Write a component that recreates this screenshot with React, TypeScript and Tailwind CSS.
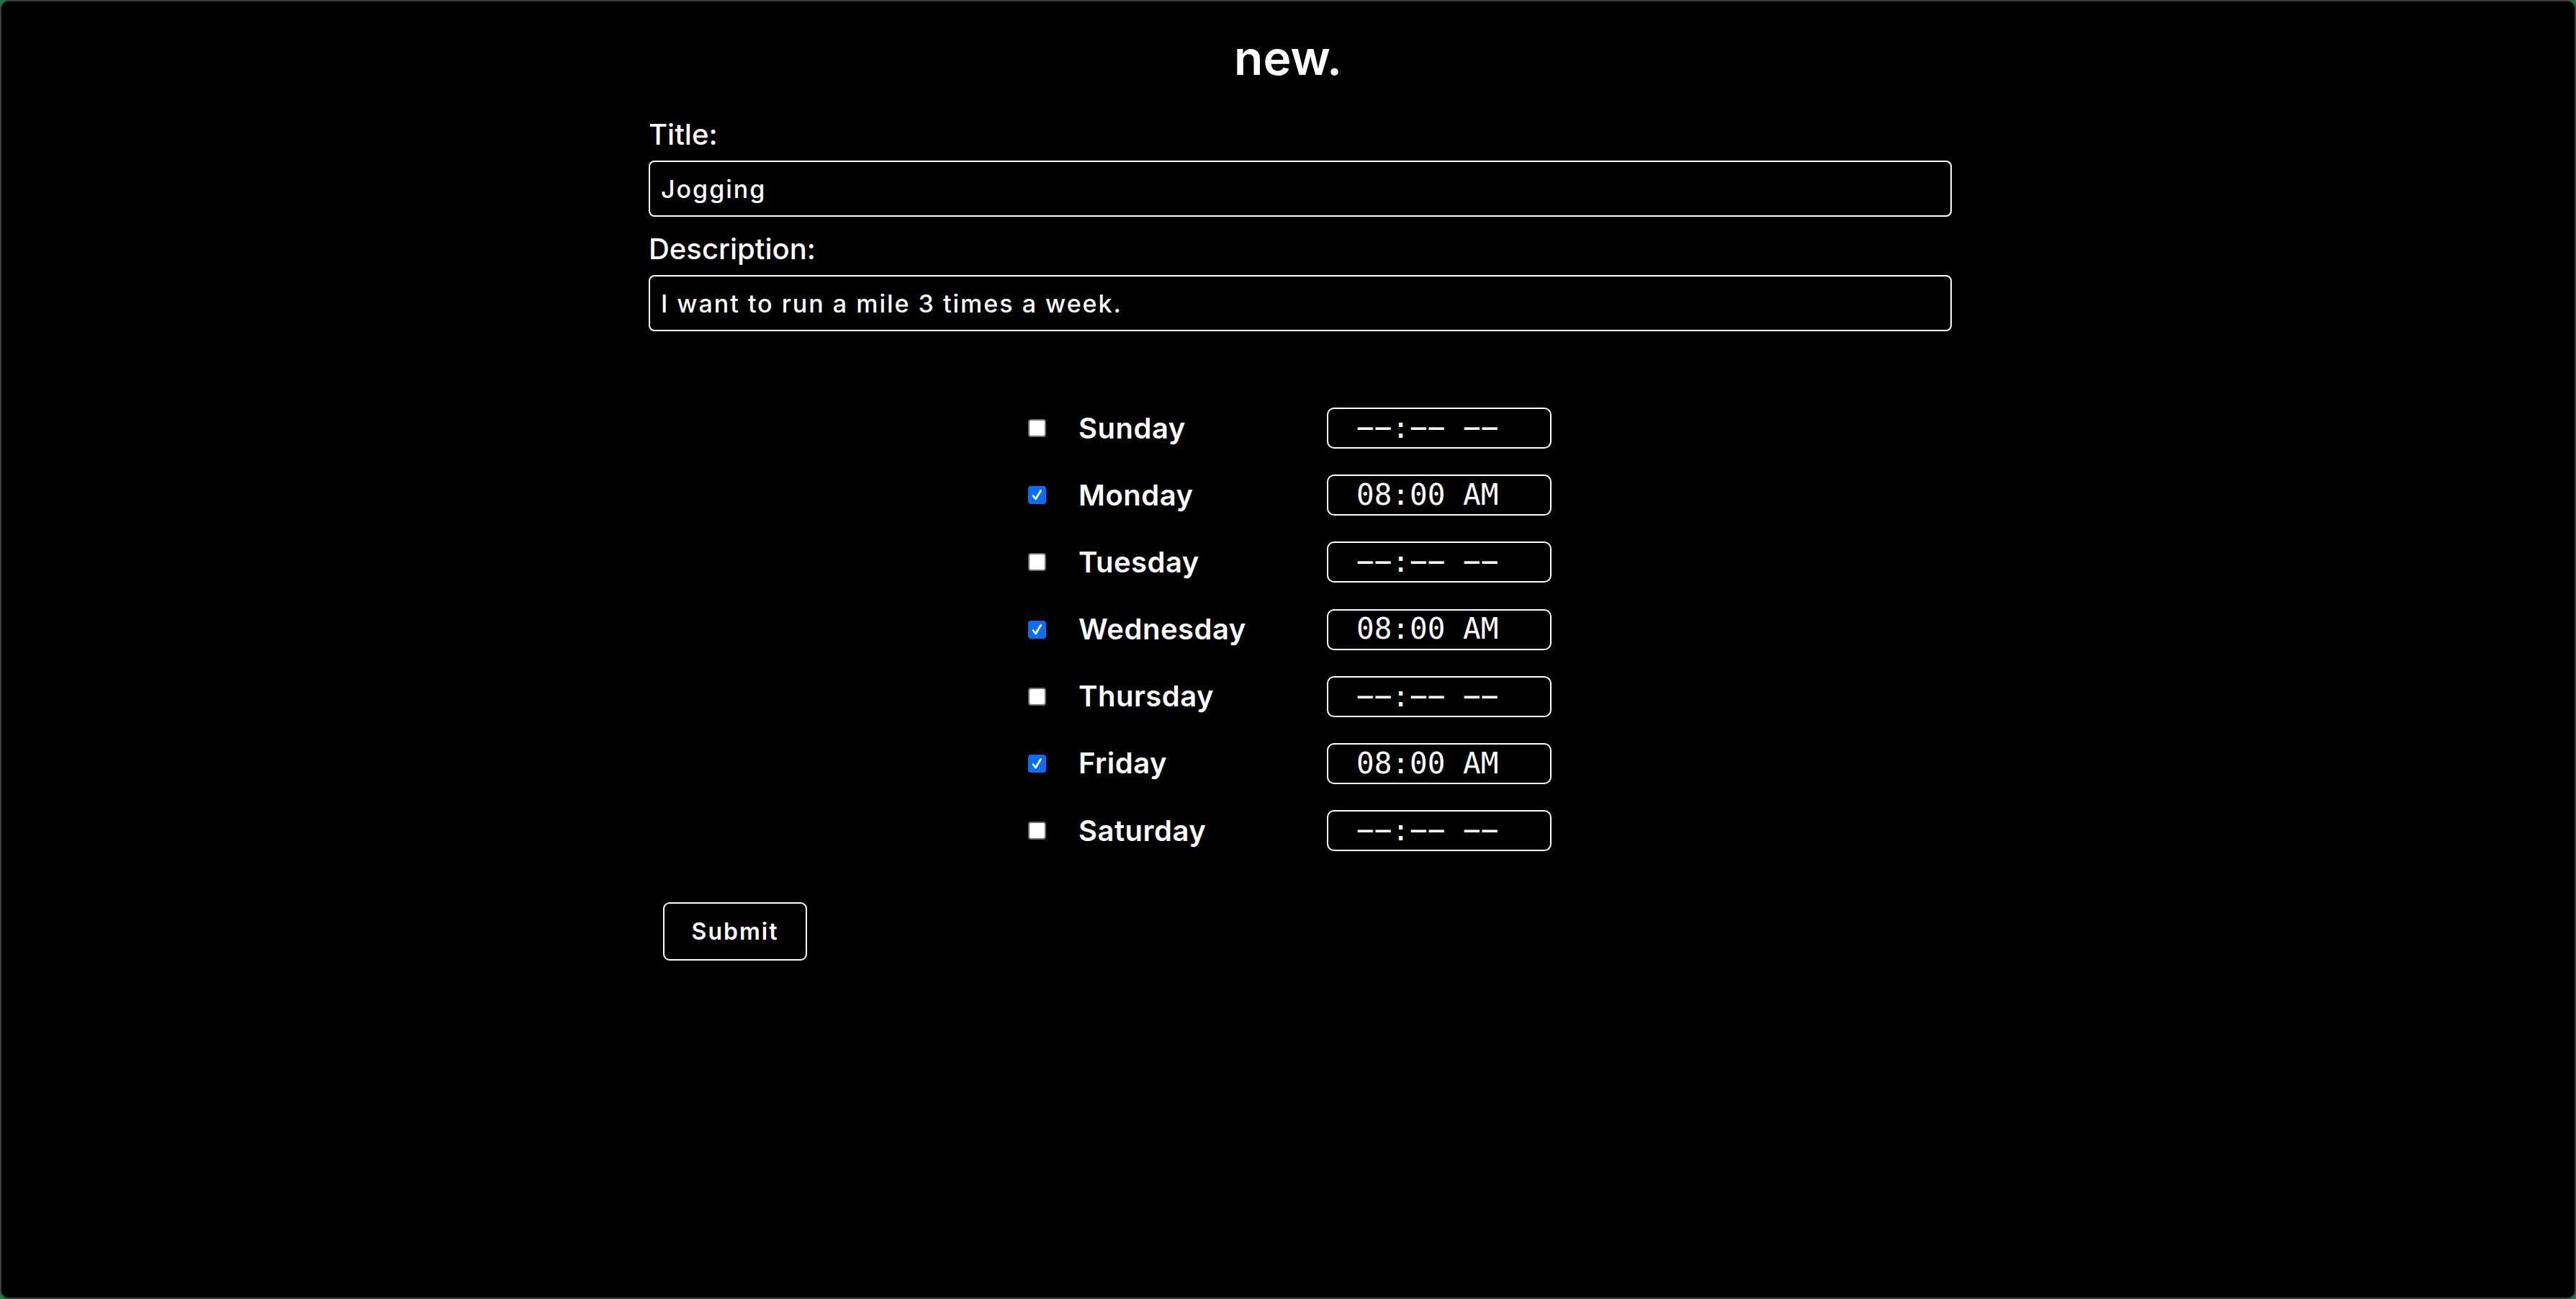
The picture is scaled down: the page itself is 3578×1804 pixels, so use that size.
const days = [
  { name: 'Sunday', on: false },
  { name: 'Monday', on: true },
  { name: 'Tuesday', on: false },
  { name: 'Wednesday', on: true },
  { name: 'Thursday', on: false },
  { name: 'Friday', on: true },
  { name: 'Saturday', on: false },
]

const Check = ({ on }: { on: boolean }) => (
  <span className="relative flex h-[25px] w-[25px] shrink-0">
    <input
      type="checkbox"
      defaultChecked={on}
      className="h-[25px] w-[25px] appearance-none rounded-[4px] border-2 border-[#6f6f6f] bg-white checked:border-[#0b6cf6] checked:bg-[#0b6cf6]"
    />
    {on && (
      <svg viewBox="0 0 25 25" className="pointer-events-none absolute inset-0 h-[25px] w-[25px]">
        <path d="M7 13.5 L10.6 18 L17.5 6.5" fill="none" stroke="white" strokeWidth="2.8" strokeLinecap="round" strokeLinejoin="round" />
      </svg>
    )}
  </span>
)

const DayRow = ({ name, on }: { name: string; on: boolean }) => (
  <div className="flex h-[57px] items-center">
    <Check on={on} />
    <label className="ml-[45px] w-[345px] text-[40px] font-semibold leading-none tracking-[0.5px]">{name}</label>
    <input
      type="text"
      readOnly
      defaultValue={on ? '08:00 AM' : '−−:−− −−'}
      className="h-[57px] w-[312px] rounded-[10px] border-2 border-white bg-black pl-[39px] font-['DejaVu_Sans_Mono',monospace] text-[41px] text-white outline-none"
    />
  </div>
)

export default function App() {
  return (
    <div className="h-screen w-full bg-[#1f7a3f]">
      <div className="h-full w-full overflow-hidden rounded-[12px] border-2 border-[#3b3b3b] bg-black font-['Inter',sans-serif] text-white">
        <form className="mx-auto w-[1776px] pt-[45px]" onSubmit={(e) => e.preventDefault()}>
          <h1 className="text-center text-[66px] font-semibold leading-none">new.</h1>

          {/* title + description */}
          <label className="mt-[54px] block text-[40px] font-medium leading-none">Title:</label>
          <input
            type="text"
            defaultValue="Jogging"
            className="mt-[16px] block h-[78px] w-[1810px] rounded-[8px] border-2 border-white bg-black px-[15px] text-[34px] font-medium tracking-[2px] text-white outline-none"
          />
          <label className="mt-[25px] block text-[40px] font-medium leading-none">Description:</label>
          <input
            type="text"
            defaultValue="I want to run a mile 3 times a week."
            className="mt-[16px] block h-[78px] w-[1810px] rounded-[8px] border-2 border-white bg-black px-[15px] text-[34px] font-medium tracking-[2px] text-white outline-none"
          />

          {/* days */}
          <div className="ml-[527px] mt-[106px] flex flex-col gap-[36.2px]">
            {days.map((d) => (
              <DayRow key={d.name} name={d.name} on={d.on} />
            ))}
          </div>

          <button
            type="submit"
            className="ml-[20px] mt-[71px] h-[81px] w-[200px] rounded-[9px] border-2 border-white bg-black text-[32px] font-semibold tracking-[2px] text-white"
          >
            Submit
          </button>
        </form>
      </div>
    </div>
  )
}
